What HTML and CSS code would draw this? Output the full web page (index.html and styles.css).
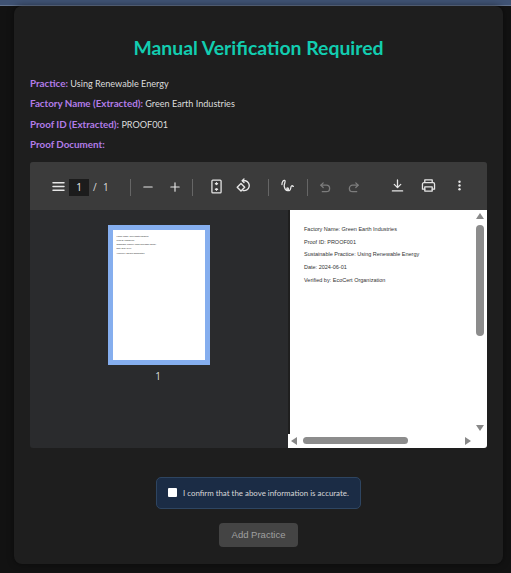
FILE: index.html
```html
<!DOCTYPE html>
<html lang="en">
<head>
<meta charset="utf-8">
<title>Manual Verification Required</title>
<link rel="stylesheet" href="styles.css">
</head>
<body>
<div class="topbar"></div>
<main class="card">
  <h1 class="title">Manual Verification Required</h1>
  <p class="row"><b>Practice:</b> Using Renewable Energy</p>
  <p class="row"><b>Factory Name (Extracted):</b> Green Earth Industries</p>
  <p class="row"><b>Proof ID (Extracted):</b> PROOF001</p>
  <p class="row"><b>Proof Document:</b></p>
  <section class="viewer">
    <div class="toolbar">
      <svg class="ic menu" viewBox="0 0 14 12"><path d="M1 2h12M1 6h12M1 10h12"/></svg>
      <span class="pagebox">1</span>
      <span class="pagecount">/</span>
      <span class="pagecount total">1</span>
      <i class="sep s1"></i>
      <svg class="ic minus" viewBox="0 0 12 12"><path d="M1 6h10"/></svg>
      <svg class="ic plus" viewBox="0 0 12 12"><path d="M1 6h10M6 1v10"/></svg>
      <i class="sep s2"></i>
      <svg class="ic fit" viewBox="0 0 12 16"><rect x="1" y="1" width="10" height="14" rx="1"/><path d="M4.800 5h2.400M6 3.800v2M4.800 11h2.400M6 10.200v2"/></svg>
      <svg class="ic rotate" viewBox="0 0 16 16"><path d="M8 1l-1.800 1.800L8 4.600"/><path d="M6.500 2.800H9.500a5 5 0 1 1-2.500 9.700"/><path d="M5 5.500L1.200 9.200 5 13l3.700-3.800z"/></svg>
      <i class="sep s3"></i>
      <svg class="ic draw" viewBox="0 0 14 14"><path d="M1 6C1 3 2.500 1 4 1.500 5.500 2 3 5.500 3.500 8 4 10.500 5.500 12.500 7 12.500 8.500 12.500 8.500 9.500 7 9.500 5.500 9.500 6.500 13 9 12.500 11 12 10 8.500 11.300 7.500 12 7 12.800 7.500 13.300 8"/></svg>
      <i class="sep s4"></i>
      <svg class="ic dim undo" viewBox="0 0 12 12"><path d="M3.500 1L1 3.500 3.500 6"/><path d="M1 3.500h6a3.500 3.500 0 0 1 0 7H2.500"/></svg>
      <svg class="ic dim redo" viewBox="0 0 12 12"><path d="M8.500 1L11 3.500 8.500 6"/><path d="M11 3.500H5a3.500 3.500 0 0 0 0 7h4.500"/></svg>
      <svg class="ic download" viewBox="0 0 14 14"><path d="M7 1v8M3.500 5.800L7 9.300l3.500-3.500M1.500 12.800h11"/></svg>
      <svg class="ic print" viewBox="0 0 16 14"><path d="M4 4V1h8v3M4 11H1.500V5.500a1.500 1.500 0 0 1 1.500-1.500h10a1.500 1.500 0 0 1 1.500 1.500V11H12"/><rect x="4" y="8.500" width="8" height="4.500"/></svg>
      <svg class="dots" viewBox="0 0 4 14"><circle cx="2" cy="2" r="1.600"/><circle cx="2" cy="7" r="1.600"/><circle cx="2" cy="12" r="1.600"/></svg>
    </div>
    <div class="panes">
      <aside class="thumbs">
        <div class="thumb">
          <div class="thumbpage">
            <span>Factory Name: Green Earth Industries</span>
            <span>Proof ID: PROOF001</span>
            <span>Sustainable Practice: Using Renewable Energy</span>
            <span>Date: 2024-06-01</span>
            <span>Verified by: EcoCert Organization</span>
          </div>
        </div>
        <div class="thumbnum">1</div>
      </aside>
      <div class="doc">
        <div class="page">
          <p>Factory Name: Green Earth Industries</p>
          <p>Proof ID: PROOF001</p>
          <p>Sustainable Practice: Using Renewable Energy</p>
          <p>Date: 2024-06-01</p>
          <p>Verified by: EcoCert Organization</p>
        </div>
        <div class="vscroll">
          <i class="tri up"></i>
          <i class="vthumb"></i>
          <i class="tri down"></i>
        </div>
        <div class="hscroll">
          <i class="tri left"></i>
          <i class="hthumb"></i>
          <i class="tri right"></i>
        </div>
      </div>
    </div>
  </section>
  <label class="confirm"><input type="checkbox" class="check"><span>I confirm that the above information is accurate.</span></label>
  <div class="actions"><button class="add" type="button">Add Practice</button></div>
</main>
</body>
</html>
```
FILE: styles.css
```css
* { box-sizing: border-box; }
html, body { margin: 0; height: 573px; overflow: hidden; }
body { background: #121212; font-family: Lato, "Open Sans", sans-serif; color: #e0e0e0; }
.topbar { height: 6px; background: #3f5273; border-bottom: 1px solid #64748f; }
.card { width: 489px; height: 558px; margin-left: 14px; background: #1e1e1e; border-radius: 8px; padding: 29px 16px 0; box-shadow: 0 0 6px rgba(0,0,0,.5); }
.title { margin: 0 0 15px; text-align: center; color: #12cdb0; font-size: 19.400px; line-height: 26px; font-weight: 700; }
.row { margin: 0 0 5.300px; height: 15px; font-size: 9.100px; line-height: 15px; color: #dcdcdc; }
.row b { color: #b27ce8; font-weight: 700; font-size: 9.800px; }
.viewer { margin-top: 10px; width: 457px; height: 286px; display: flex; flex-direction: column; background: #2a2b2d; border-radius: 3px; overflow: hidden; }
.toolbar { position: relative; height: 48px; flex: none; background: #3b3b3b; }
.ic { position: absolute; fill: none; stroke: #e6e6e6; stroke-width: 1.400; stroke-linecap: round; stroke-linejoin: round; }
.ic.dim { stroke: #7c7c7c; }
.menu { left: 22px; top: 19px; width: 13px; height: 11px; stroke-width: 1.600; }
.pagebox { position: absolute; left: 39px; top: 17px; width: 20px; height: 17px; background: #1c1c1c; color: #eee; font: 10px/17px "Open Sans", sans-serif; text-align: center; }
.pagecount { position: absolute; left: 63px; top: 17px; font: 10px/17px "Open Sans", sans-serif; color: #ddd; }
.pagecount.total { left: 73px; }
.sep { position: absolute; top: 17px; width: 1px; height: 17px; background: #666; }
.s1 { left: 100px; } .s2 { left: 162px; } .s3 { left: 238px; } .s4 { left: 277px; }
.minus { left: 113px; top: 20px; width: 10px; height: 10px; }
.plus { left: 140px; top: 20px; width: 10px; height: 10px; }
.fit { left: 181px; top: 17px; width: 11px; height: 15px; }
.rotate { left: 206px; top: 16px; width: 16px; height: 16px; }
.draw { left: 251px; top: 17px; width: 13px; height: 13px; }
.undo { left: 290px; top: 20px; width: 11px; height: 11px; }
.redo { left: 318px; top: 20px; width: 11px; height: 11px; }
.download { left: 361px; top: 17px; width: 13px; height: 13px; }
.print { left: 391px; top: 17px; width: 15px; height: 13px; }
.dots { position: absolute; left: 428px; top: 18px; width: 3px; height: 11px; fill: #e6e6e6; }
.panes { flex: 1; display: flex; min-height: 0; }
.thumbs { width: 258px; padding-top: 16px; display: flex; flex-direction: column; align-items: center; }
.thumb { width: 102px; height: 140px; margin-left: -1px; margin-top: -1px; padding: 5px; background: #85aeee; }
.thumbpage { height: 100%; background: #fff; padding: 5px 4px; display: flex; flex-direction: column; gap: 2.200px; }
.thumbpage span { font: 1.900px/2px "Liberation Sans", sans-serif; color: #222; white-space: nowrap; }
.thumbnum { margin-top: 4px; margin-left: -2px; font: 10px/14px "Open Sans", sans-serif; color: #ddd; }
.doc { position: relative; flex: 1; background: #fff; overflow: hidden; }
.page { padding: 17px 0 0 16px; }
.page p { margin: 0 0 7.300px; font: 5.500px/5.500px "Liberation Sans", sans-serif; color: #333; white-space: nowrap; }
.doc::before { content: ""; position: absolute; left: 0; top: 0; width: 2px; height: 224px; background: #1f1f1f; }
.vscroll { position: absolute; top: 0; right: 0; width: 14px; height: 224px; }
.vthumb { position: absolute; left: 3px; top: 15px; width: 8px; height: 111px; border-radius: 4px; background: #8c8c8c; }
.hscroll { position: absolute; left: 0; bottom: 0; width: 100%; height: 14px; }
.hthumb { position: absolute; left: 15px; top: 3px; width: 105px; height: 7px; border-radius: 4px; background: #8c8c8c; }
.tri { position: absolute; width: 0; height: 0; border-style: solid; border-color: transparent; }
.up { left: 3px; top: 3px; border-width: 0 4px 6px; border-bottom-color: #888; }
.down { left: 3px; bottom: 3px; border-width: 6px 4px 0; border-top-color: #888; }
.left { left: 3px; top: 3px; border-width: 4px 6px 4px 0; border-right-color: #888; }
.right { left: 177px; top: 3px; border-width: 4px 0 4px 6px; border-left-color: #888; }
.confirm { display: flex; align-items: center; gap: 6px; width: 205px; height: 32px; margin: 29px auto 0; margin-left: 126px; padding-left: 11px; background: #1b2c45; border: 1px solid #2e4561; border-radius: 5px; font-size: 7.900px; color: #d8d8d8; white-space: nowrap; }
.check { appearance: none; margin: 0; width: 9px; height: 9px; background: #fff; border-radius: 1px; flex: none; }
.actions { display: flex; justify-content: center; margin-top: 14px; }
.add { width: 79px; height: 24px; padding: 0; border: 0; border-radius: 4px; background: #444; color: #a0a0a0; font: 9.500px "Liberation Sans", sans-serif; }
```
